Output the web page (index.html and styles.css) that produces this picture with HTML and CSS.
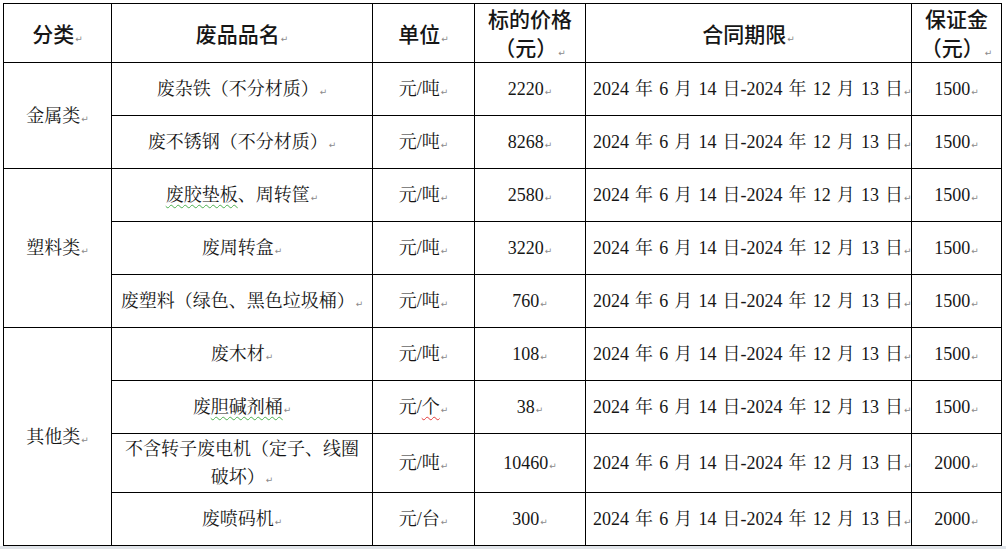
FILE: index.html
```html
<!DOCTYPE html>
<html lang="zh">
<head>
<meta charset="utf-8">
<title>废品清单</title>
<link rel="stylesheet" href="styles.css">
</head>
<body>
<div class="page">
<table class="sheet">
<colgroup>
<col class="c1"><col class="c2"><col class="c3"><col class="c4"><col class="c5"><col class="c6">
</colgroup>
<thead>
<tr class="head">
<th>分类<span class="pm">↵</span></th>
<th>废品品名<span class="pm">↵</span></th>
<th>单位<span class="pm">↵</span></th>
<th>标的价格（元）<span class="pm">↵</span></th>
<th>合同期限<span class="pm">↵</span></th>
<th>保证金（元）<span class="pm">↵</span></th>
</tr>
</thead>
<tbody>
<tr>
<td rowspan="2">金属类<span class="pm">↵</span></td>
<td>废杂铁（不分材质）<span class="pm">↵</span></td>
<td>元/吨<span class="pm">↵</span></td>
<td>2220<span class="pm">↵</span></td>
<td class="date">2024 年 6 月 14 日-2024 年 12 月 13 日<span class="pm">↵</span></td>
<td>1500<span class="pm">↵</span></td>
</tr>
<tr>
<td>废不锈钢（不分材质）<span class="pm">↵</span></td>
<td>元/吨<span class="pm">↵</span></td>
<td>8268<span class="pm">↵</span></td>
<td class="date">2024 年 6 月 14 日-2024 年 12 月 13 日<span class="pm">↵</span></td>
<td>1500<span class="pm">↵</span></td>
</tr>
<tr>
<td rowspan="3">塑料类<span class="pm">↵</span></td>
<td><span class="wavy-g">废胶垫板</span>、周转筐<span class="pm">↵</span></td>
<td>元/吨<span class="pm">↵</span></td>
<td>2580<span class="pm">↵</span></td>
<td class="date">2024 年 6 月 14 日-2024 年 12 月 13 日<span class="pm">↵</span></td>
<td>1500<span class="pm">↵</span></td>
</tr>
<tr>
<td>废周转盒<span class="pm">↵</span></td>
<td>元/吨<span class="pm">↵</span></td>
<td>3220<span class="pm">↵</span></td>
<td class="date">2024 年 6 月 14 日-2024 年 12 月 13 日<span class="pm">↵</span></td>
<td>1500<span class="pm">↵</span></td>
</tr>
<tr>
<td>废塑料（绿色、黑色垃圾桶）<span class="pm">↵</span></td>
<td>元/吨<span class="pm">↵</span></td>
<td>760<span class="pm">↵</span></td>
<td class="date">2024 年 6 月 14 日-2024 年 12 月 13 日<span class="pm">↵</span></td>
<td>1500<span class="pm">↵</span></td>
</tr>
<tr>
<td rowspan="4">其他类<span class="pm">↵</span></td>
<td>废木材<span class="pm">↵</span></td>
<td>元/吨<span class="pm">↵</span></td>
<td>108<span class="pm">↵</span></td>
<td class="date">2024 年 6 月 14 日-2024 年 12 月 13 日<span class="pm">↵</span></td>
<td>1500<span class="pm">↵</span></td>
</tr>
<tr>
<td>废<span class="wavy-g">胆碱剂桶</span><span class="pm">↵</span></td>
<td>元/<span class="wavy-r">个</span><span class="pm">↵</span></td>
<td>38<span class="pm">↵</span></td>
<td class="date">2024 年 6 月 14 日-2024 年 12 月 13 日<span class="pm">↵</span></td>
<td>1500<span class="pm">↵</span></td>
</tr>
<tr class="tall">
<td>不含转子废电机（定子、线圈破坏）<span class="pm">↵</span></td>
<td>元/吨<span class="pm">↵</span></td>
<td>10460<span class="pm">↵</span></td>
<td class="date">2024 年 6 月 14 日-2024 年 12 月 13 日<span class="pm">↵</span></td>
<td>2000<span class="pm">↵</span></td>
</tr>
<tr>
<td>废喷码机<span class="pm">↵</span></td>
<td>元/台<span class="pm">↵</span></td>
<td>300<span class="pm">↵</span></td>
<td class="date">2024 年 6 月 14 日-2024 年 12 月 13 日<span class="pm">↵</span></td>
<td>2000<span class="pm">↵</span></td>
</tr>
</tbody>
</table>
</div>
</body>
</html>
```

FILE: styles.css
```css
html, body {
  margin: 0;
  padding: 0;
}
body {
  background: #dfe3e8;
  width: 1006px;
  height: 549px;
  overflow: hidden;
}
.page {
  background: #ffffff;
  height: 546px;
  padding: 3px 0 0 3px;
  box-sizing: border-box;
}
.sheet {
  border-collapse: collapse;
  table-layout: fixed;
  width: 998px;
  font-family: "Liberation Serif", "Noto Serif CJK SC", "Noto Sans CJK SC", serif;
  font-size: 18px;
  color: #161616;
}
.c1 { width: 108px; }
.c2 { width: 261px; }
.c3 { width: 102px; }
.c4 { width: 111px; }
.c5 { width: 326px; }
.c6 { width: 90px; }
.sheet th,
.sheet td {
  border: 1px solid #000;
  padding: 0 7px;
  text-align: center;
  vertical-align: middle;
  line-height: 28px;
}
.sheet th {
  font-family: "Noto Sans CJK SC", "Liberation Sans", sans-serif;
  font-weight: 500;
  font-size: 21px;
  line-height: 29px;
  height: 58px;
  padding: 0 5px;
}
.sheet td {
  height: 52px;
}
.sheet tr.tall td {
  height: 58px;
}
.sheet td[rowspan] {
  height: auto;
}
.date {
  white-space: nowrap;
  padding: 0 2px;
  word-spacing: 1.6px;
}
.pm {
  font-family: "DejaVu Sans", sans-serif;
  font-size: 9px;
  line-height: 1;
  color: #8a8a8a;
  font-weight: 400;
  margin-left: 1px;
}
.wavy-g {
  text-decoration: underline wavy #4caf50;
  text-decoration-thickness: 1px;
  text-underline-offset: 3px;
}
.wavy-r {
  text-decoration: underline wavy #e23b3b;
  text-decoration-thickness: 1px;
  text-underline-offset: 3px;
}
```
